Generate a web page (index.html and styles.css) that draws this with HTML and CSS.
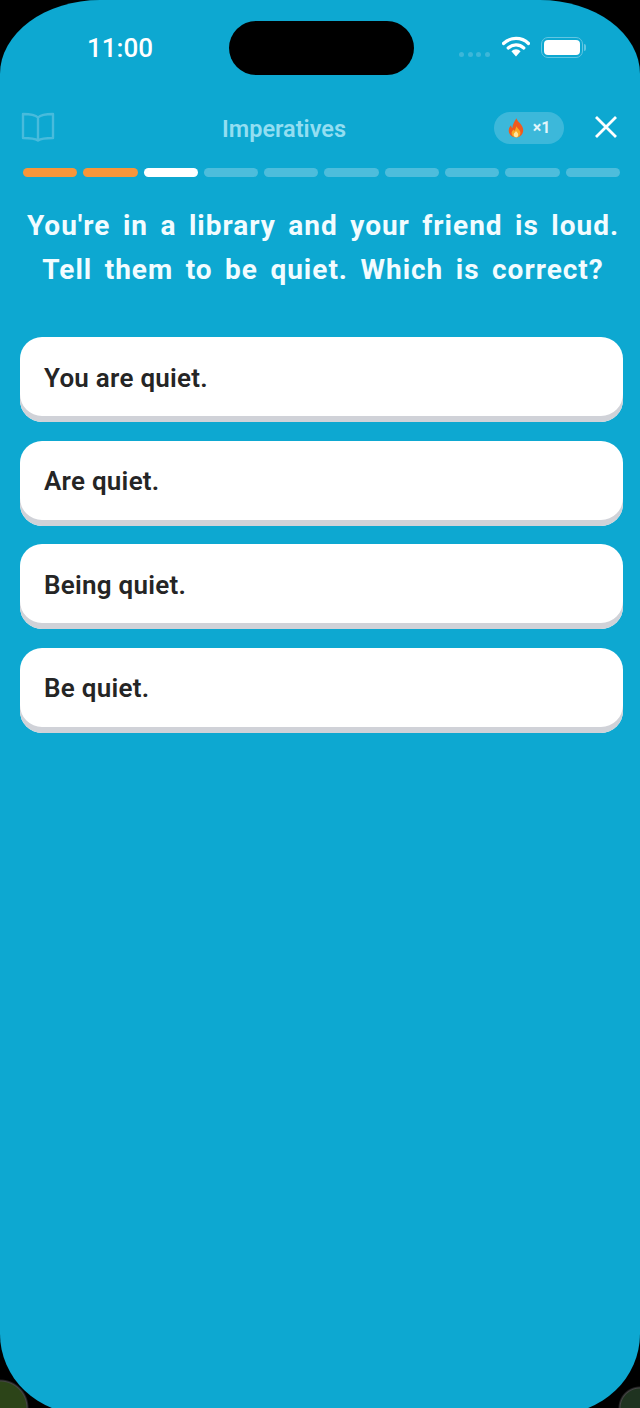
FILE: index.html
```html
<!DOCTYPE html>
<html lang="en">
<head>
<meta charset="utf-8">
<title>Imperatives</title>
<link rel="stylesheet" href="styles.css">
</head>
<body>
<main class="screen">
  <div class="status">
    <span class="time">11:00</span>
    <div class="island"></div>
    <div class="status-icons">
      <div class="signal"><i></i><i></i><i></i><i></i></div>
      <svg class="wifi" width="28" height="21" viewBox="0 0 28 21"><path d="M1.5 7.5a18 18 0 0 1 25 0" fill="none" stroke="#fff" stroke-width="3.2" stroke-linecap="round"/><path d="M6.2 12a11.5 11.5 0 0 1 15.6 0" fill="none" stroke="#fff" stroke-width="3.2" stroke-linecap="round"/><path d="M9.4 15.2 14 20.4l4.6-5.2a6.6 6.6 0 0 0-9.2 0z" fill="#fff"/></svg>
      <div class="battery"><div class="battery-fill"></div></div>
      <div class="battery-cap"></div>
    </div>
  </div>
  <header class="topbar">
    <svg class="book" width="34" height="32" viewBox="0 0 34 32"><path d="M17 6.500C14 3.500 9 3 2 3v24c7 0 12 .5 15 2.500 3-2 8-2.500 15-2.500V3c-7 0-12 .5-15 3.500zm0 0v23" fill="none" stroke="#48bbdc" stroke-width="2.400" stroke-linejoin="round"/></svg>
    <h1 class="title">Imperatives</h1>
    <div class="streak">
      <svg class="flame" width="16" height="20" viewBox="0 0 18 22"><path d="M9.500 0c1 4 6.500 6.500 7.500 12 .8 5-3 9.500-8 9.500S0 17.500 1 12.500c.4-2 1.400-3.500 2.500-4.500 0 1.500.5 2.500 1.500 3C5 7 7 4 9.500 0z" fill="#ef5a1f"/><path d="M9.500 9c.8 2.500 4.500 4 4.500 7.500 0 3-2.200 5-5 5s-5-2-5-4.800c0-2 1.500-3 2.300-4 .4 1 .8 1.300 1.300 1.500C8.200 12.500 8.800 11 9.500 9z" fill="#f9a825"/><path d="M9 14.500c.5 1.500 2.500 2 2.500 4 0 1.700-1.200 3-2.500 3s-2.600-1.200-2.600-2.800c0-2 2-2.500 2.600-4.200z" fill="#fde7a0"/></svg>
      <span class="streak-count">×1</span>
    </div>
    <svg class="close" width="24" height="24" viewBox="0 0 24 24"><path d="M2 2l20 20M22 2L2 22" stroke="#fff" stroke-width="2.800" fill="none"/></svg>
  </header>
  <div class="progress">
    <span class="seg done"></span><span class="seg done"></span><span class="seg current"></span><span class="seg"></span><span class="seg"></span><span class="seg"></span><span class="seg"></span><span class="seg"></span><span class="seg"></span><span class="seg"></span>
  </div>
  <p class="question">You're in a library and your friend is loud.<br>Tell them to be quiet. Which is correct?</p>
  <div class="options">
    <button class="option">You are quiet.</button>
    <button class="option">Are quiet.</button>
    <button class="option">Being quiet.</button>
    <button class="option">Be quiet.</button>
  </div>
</main>
</body>
</html>
```
FILE: styles.css
```css
* { box-sizing: border-box; }
html, body { margin: 0; height: 1408px; overflow: hidden; background: #000; }
body {
  font-family: Roboto, "Liberation Sans", sans-serif;
  background:
    radial-gradient(circle at 0 1408px, #2c4418 0 26px, #444 27px, #000 29px),
    radial-gradient(circle at 640px 1408px, #1f3320 0 19px, #444 20px, #000 22px);
  background-blend-mode: lighten;
}
.screen {
  height: 1414px;
  background: #0da8d1;
  border-radius: 100px 100px 84px 84px / 74px 74px 80px 80px;
  padding: 21px 20px 0 20px;
}
.status { display: flex; align-items: center; height: 54px; }
.time {
  width: 200px; margin-right: 9px; text-align: center;
  color: #fff; font-size: 26px; font-weight: 500;
}
.island { width: 185px; height: 54px; background: #000; border-radius: 27px; }
.status-icons { display: flex; align-items: center; margin-left: 45px; }
.signal { display: flex; gap: 3.500px; margin-top: 13px; margin-right: 12px; }
.signal i { width: 5px; height: 5px; border-radius: 50%; background: #3db7d9; }
.wifi { margin-top: -3px; margin-right: 11px; }
.battery { width: 42px; height: 21px; border: 1.500px solid #62c6e2; border-radius: 7px; padding: 2px; margin-top: -2px; }
.battery-fill { height: 100%; background: #fff; border-radius: 4px; }
.battery-cap { width: 2px; height: 7px; background: #62c6e2; border-radius: 0 2px 2px 0; margin: -2px 0 0 1px; }
.topbar { display: flex; align-items: center; height: 44px; margin-top: 32px; }
.book { margin-left: 1px; margin-top: -4px; }
.title {
  margin: 0 0 0 167px; width: 125px;
  color: #93def1; font-size: 23.500px; font-weight: 600; white-space: nowrap;
}
.streak {
  display: flex; align-items: center; justify-content: center; gap: 9px;
  width: 70px; height: 32px; margin-left: 147px; margin-top: -3px;
  border-radius: 16px; background: #3cb8da;
}
.streak-count { color: #e3f5fb; font-size: 16px; font-weight: 700; }
.close { margin-left: 30px; margin-top: -4px; }
.progress { display: flex; gap: 6px; margin: 17px 0 0 3px; }
.seg { flex: 1; height: 9px; border-radius: 5px; background: #4dbddc; }
.seg.done { background: #f7963a; }
.seg.current { background: #fff; }
.question {
  width: 603px; margin: 27px 0 45px; padding-left: 3px; color: #f2fcff; text-align: center;
  font-size: 28px; font-weight: 700; line-height: 44px;
  letter-spacing: 1px; word-spacing: 4.500px; white-space: nowrap;
}
.options { display: flex; flex-direction: column; gap: 18.500px; width: 603px; }
.option {
  height: 85px; padding: 0 24px 4px; border: 0; text-align: left;
  background: #fff; border-radius: 22px; box-shadow: inset 0 -6px 0 #d0d2d8;
  color: #252525; font-family: inherit; font-size: 26px; font-weight: 600; letter-spacing: 0.250px;
}
```
